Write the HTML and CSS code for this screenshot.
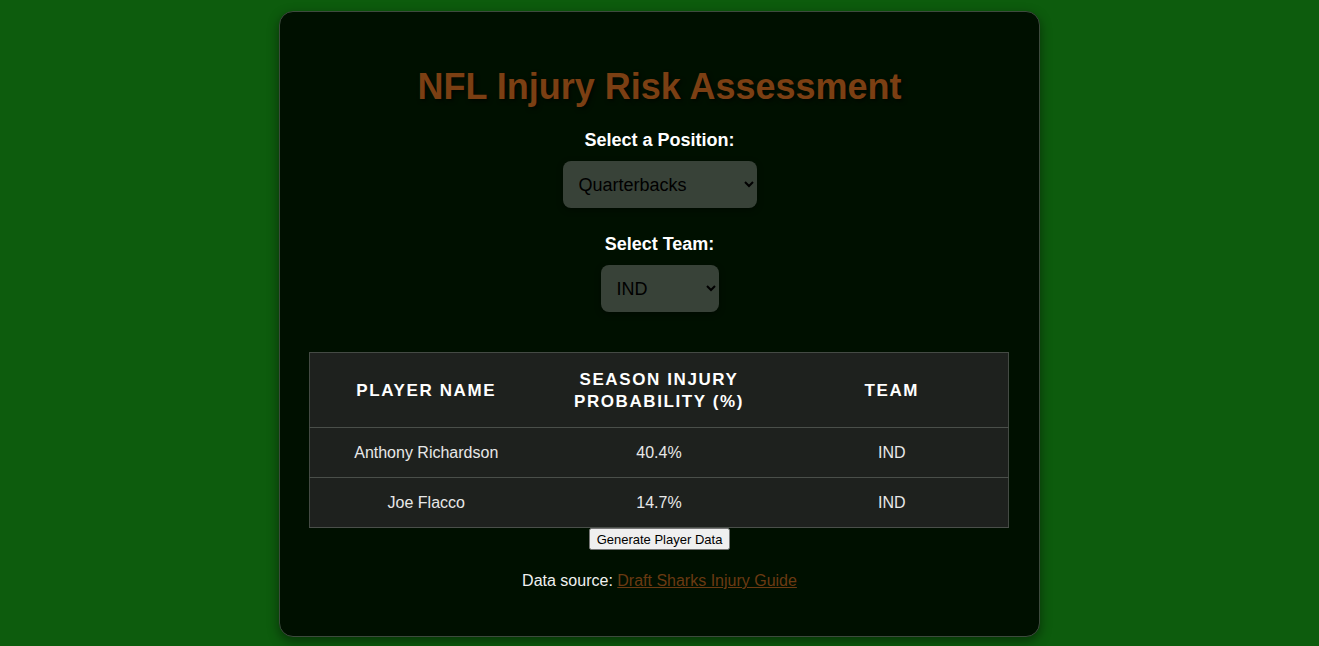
FILE: index.html
```html
<!DOCTYPE html>
<html lang="en">
<head>
<meta charset="utf-8">
<title>NFL Injury Risk Assessment</title>
<link rel="stylesheet" href="styles.css">
</head>
<body>
<div class="container">
  <h1 class="title">NFL Injury Risk Assessment</h1>
  <div class="field">
    <label class="field-label" for="position">Select a Position:</label>
    <select id="position" class="picker">
      <option>Quarterbacks</option>
      <option>Running Backs</option>
      <option>Wide Receivers</option>
      <option>Tight Ends</option>
    </select>
  </div>
  <div class="field">
    <label class="field-label" for="team">Select Team:</label>
    <select id="team" class="picker">
      <option>IND</option>
      <option>KC</option>
      <option>BUF</option>
    </select>
  </div>
  <table class="data-table">
    <thead>
      <tr>
        <th>Player Name</th>
        <th>Season Injury Probability (%)</th>
        <th>Team</th>
      </tr>
    </thead>
    <tbody>
      <tr><td>Anthony Richardson</td><td>40.4%</td><td>IND</td></tr>
      <tr><td>Joe Flacco</td><td>14.7%</td><td>IND</td></tr>
    </tbody>
  </table>
  <div class="actions">
    <button class="gen-btn">Generate Player Data</button>
  </div>
  <p class="source">Data source: <a href="#" class="source-link">Draft Sharks Injury Guide</a></p>
</div>
</body>
</html>
```
FILE: styles.css
```css
html, body {
  margin: 0;
  padding: 0;
}
body {
  background: #0d5c0d;
  font-family: "Liberation Sans", Arial, sans-serif;
  color: #f0f0f0;
  padding: 11px 0 10px;
  min-height: 646px;
  box-sizing: border-box;
}
.container {
  box-sizing: border-box;
  width: 761px;
  margin: 0 auto;
  background: #001000;
  border: 1px solid #3d4a3d;
  border-radius: 14px;
  padding: 29px 29px 46px;
  box-shadow: 0 4px 12px rgba(0, 0, 0, 0.45);
  text-align: center;
}
.title {
  font-size: 36px;
  font-weight: bold;
  color: #7b3f13;
  margin: 25px 0 21px;
  line-height: 42px;
  text-shadow: 2px 2px 4px rgba(0, 0, 0, 0.6);
}
.field {
  display: flex;
  flex-direction: column;
  align-items: center;
  margin-bottom: 25px;
}
.field-label {
  font-size: 18px;
  font-weight: bold;
  color: #ffffff;
  line-height: 22px;
  margin-bottom: 10px;
}
.picker {
  font-family: "Liberation Sans", Arial, sans-serif;
  font-size: 18px;
  color: #000;
  background: #384238;
  border: none;
  border-radius: 8px;
  padding: 12px 12px;
  height: 47px;
  box-shadow: 0 2px 6px rgba(0, 0, 0, 0.4);
}
#position { width: 194px; }
#team { width: 118px; }
.data-table {
  width: 700px;
  margin: 40px 0 0;
  border-collapse: collapse;
  table-layout: fixed;
  background: #1e211e;
  border: 1px solid #444a44;
}
.data-table th {
  font-size: 17px;
  font-weight: bold;
  text-transform: uppercase;
  letter-spacing: 1.6px;
  line-height: 22px;
  color: #ffffff;
  padding: 16px 25px 14px;
  height: 44px;
  border-bottom: 1px solid #4a4f4a;
}
.data-table td {
  font-size: 16px;
  color: #e8e8e8;
  padding: 15px 10px;
  line-height: 19px;
  border-bottom: 1px solid #4a4f4a;
}
.actions {
  display: flex;
  justify-content: center;
}
.gen-btn {
  font-family: "Liberation Sans", Arial, sans-serif;
  font-size: 13px;
  height: 22px;
  padding: 1px 6px;
  margin-top: 0;
}
.source {
  font-size: 16px;
  color: #f0f0f0;
  margin: 22px 0 0;
}
.source-link {
  color: #6b3a12;
}
```
